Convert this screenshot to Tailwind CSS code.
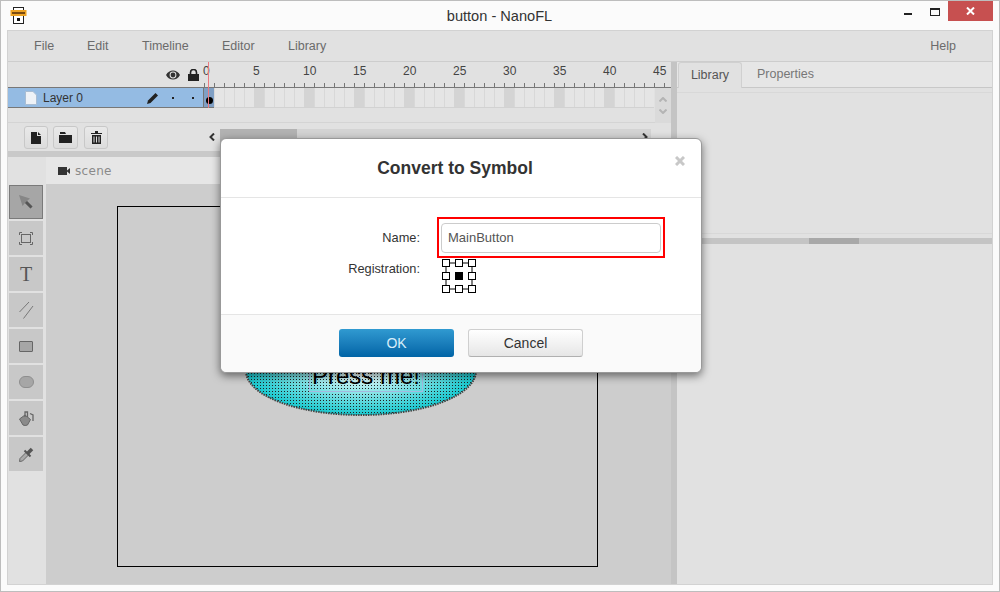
<!DOCTYPE html>
<html lang="en">
<head>
  <meta charset="UTF-8" />
  <title>button - NanoFL</title>
  <script src="https://cdn.jsdelivr.net/npm/@tailwindcss/browser@4"></script>
</head>
<body class="font-['Liberation_Sans',Arial,sans-serif]">
  <div class="relative w-[1000px] h-[592px] overflow-hidden bg-[#fbfbfb] border border-[#bdbdbd] flex flex-col">

    <!-- title bar -->
    <div class="h-[29px] shrink-0 flex items-start relative">
      <svg class="absolute left-[9px] top-[6px]" width="17" height="17" viewBox="0 0 17 17">
        <rect x="3.5" y="0.5" width="10" height="16" fill="#fff" stroke="#222"/>
        <rect x="0.5" y="3" width="16" height="6" fill="#eda324"/>
        <rect x="2" y="5" width="13" height="2" fill="#7a4a10"/>
        <rect x="7" y="11" width="3" height="3" fill="#111"/>
      </svg>
      <div class="flex-1 text-center text-[14.6px] leading-[30px] text-[#333] -ml-[1px]">button - NanoFL</div>
      <div class="absolute left-[903px] top-[12px] w-[8px] h-[2px] bg-[#222]"></div>
      <div class="absolute left-[929px] top-[7px] w-[10px] h-[8px] border border-t-2 border-[#222]"></div>
      <div class="absolute left-[947px] top-0 w-[45px] h-[20px] bg-[#c75050] flex items-center justify-center">
        <svg width="9" height="8" viewBox="0 0 9 8"><path d="M1 0.5 L8 7.5 M8 0.5 L1 7.5" stroke="#fff" stroke-width="2"/></svg>
      </div>
    </div>

    <!-- app -->
    <div class="ml-[6px] w-[986px] h-[555px] border border-[#d2d2d2] bg-[#e1e1e1] flex flex-col">
      <div class="h-[31px] shrink-0 border-b border-[#cdcdcd] flex items-center text-[12.5px] text-[#6b6b6b] pl-[26px]">
        <span class="w-[53px]">File</span>
        <span class="w-[55px]">Edit</span>
        <span class="w-[80px]">Timeline</span>
        <span class="w-[66px]">Editor</span>
        <span>Library</span>
        <span class="ml-auto mr-[36px]">Help</span>
      </div>

      <div class="flex flex-1 min-h-0">
        <!-- left side -->
        <div class="w-[663px] shrink-0 flex flex-col">
          <!-- timeline -->
          <div class="h-[89px] shrink-0 flex flex-col relative">
            <div class="h-[26px] shrink-0 flex border-b border-[#777]">
              <div class="w-[196px] shrink-0 flex items-center justify-end gap-[8px] pr-[5px] pt-[1px]">
                <svg width="14" height="10" viewBox="0 0 14 10"><path d="M0 5 C3 -1 11 -1 14 5 C11 11 3 11 0 5Z" fill="#333"/><circle cx="7" cy="5" r="3.4" fill="#e1e1e1"/><circle cx="7" cy="5" r="2.4" fill="#333"/></svg>
                <svg width="11" height="12" viewBox="0 0 11 12"><path d="M2.5 5V3.5a3 3 0 0 1 6 0V5" fill="none" stroke="#222" stroke-width="1.6"/><rect x="0" y="5" width="11" height="7" fill="#222"/></svg>
              </div>
              <div class="flex-1 relative text-[12px] text-[#444] leading-[19px] flex -ml-[1px]">
                <span class="w-[50px]">0</span><span class="w-[50px]">5</span><span class="w-[50px]">10</span><span class="w-[50px]">15</span><span class="w-[50px]">20</span><span class="w-[50px]">25</span><span class="w-[50px]">30</span><span class="w-[50px]">35</span><span class="w-[50px]">40</span><span class="w-[16px]">45</span>
                <div class="absolute left-[1px] right-0 bottom-0 h-[4px] bg-[repeating-linear-gradient(90deg,#777_0,#777_1px,transparent_1px,transparent_10px)]"></div>
              </div>
            </div>
            <div class="h-[21px] shrink-0 flex">
              <div class="w-[195px] shrink-0 h-[20px] bg-[#94bbe3] border-b border-[#777] flex items-center text-[12px] text-[#333]">
                <svg class="ml-[17px] mr-[6px]" width="12" height="14" viewBox="0 0 12 14"><path d="M0.5 0.5H8L11.5 4V13.5H0.5Z" fill="#eef2f7" stroke="#a9bdd3"/></svg>
                <span>Layer 0</span>
                <svg class="ml-[64px]" width="12" height="12" viewBox="0 0 12 12"><path d="M0 12 L1 8.5 L8.5 1 L11 3.5 L3.5 11Z" fill="#222"/></svg>
                <span class="ml-[13px] w-[2px] h-[2px] bg-[#222]"></span>
                <span class="ml-[18px] w-[2px] h-[2px] bg-[#222]"></span>
              </div>
              <div class="w-[11px] shrink-0 h-[20px] bg-[#7f9fc4] border-l border-b border-[#777] flex items-center justify-center">
                <span class="w-[7px] h-[7px] shrink-0 rounded-full bg-black mt-[6px]"></span>
              </div>
              <div class="w-[440px] h-[20px] border-b border-[#d2d2d2] bg-[repeating-linear-gradient(90deg,#d8d8d8_0,#d8d8d8_1px,#e5e5e5_1px,#e5e5e5_10px)] flex">
                <div class="w-[40px] h-full"></div><div class="w-[10px] h-full bg-[#d4d4d4]"></div>
                <div class="w-[40px] h-full"></div><div class="w-[10px] h-full bg-[#d4d4d4]"></div>
                <div class="w-[40px] h-full"></div><div class="w-[10px] h-full bg-[#d4d4d4]"></div>
                <div class="w-[40px] h-full"></div><div class="w-[10px] h-full bg-[#d4d4d4]"></div>
                <div class="w-[40px] h-full"></div><div class="w-[10px] h-full bg-[#d4d4d4]"></div>
                <div class="w-[40px] h-full"></div><div class="w-[10px] h-full bg-[#d4d4d4]"></div>
                <div class="w-[40px] h-full"></div><div class="w-[10px] h-full bg-[#d4d4d4]"></div>
                <div class="w-[40px] h-full"></div><div class="w-[10px] h-full bg-[#d4d4d4]"></div>
              </div>
            </div>
            <div class="h-[14px] shrink-0 border-b border-[#d4d4d4]"></div>
            <div class="flex-1 flex items-start pl-[16px] pt-[3px] gap-[5px]">
              <div class="w-[24px] h-[23px] rounded-[3px] border border-[#c8c8c8] bg-gradient-to-b from-[#e9e9e9] to-[#dcdcdc] flex items-center justify-center">
                <svg width="10" height="12" viewBox="0 0 10 12"><path d="M0 0H6V4H10V12H0Z M7 0L10 3H7Z" fill="#222"/></svg>
              </div>
              <div class="w-[25px] h-[23px] rounded-[3px] border border-[#c8c8c8] bg-gradient-to-b from-[#e9e9e9] to-[#dcdcdc] flex items-center justify-center">
                <svg width="13" height="11" viewBox="0 0 13 11"><path d="M0 3H13V11H0Z M1 0H6L7 2H1Z" fill="#222"/></svg>
              </div>
              <div class="w-[24px] h-[23px] rounded-[3px] border border-[#c8c8c8] bg-gradient-to-b from-[#e9e9e9] to-[#dcdcdc] flex items-center justify-center ml-[1px]">
                <svg width="11" height="13" viewBox="0 0 11 13"><path d="M0 2H11V3H0Z M4 0H7V2H4Z" fill="#222"/><path d="M1 4H10V13H1Z" fill="#222"/><path d="M3 5.5V11.5 M5.5 5.5V11.5 M8 5.5V11.5" stroke="#ddd"/></svg>
              </div>
            </div>
            <!-- scroll arrows of the timeline -->
            <div class="absolute left-[647px] top-[26px] w-[16px] h-[35px] bg-[#dadada] flex flex-col items-center justify-center gap-[7px]">
              <svg width="8" height="5" viewBox="0 0 8 5"><path d="M0.5 4.5L4 1L7.5 4.5" fill="none" stroke="#b4b4b4" stroke-width="2"/></svg>
              <svg width="8" height="5" viewBox="0 0 8 5"><path d="M0.5 0.5L4 4L7.5 0.5" fill="none" stroke="#b4b4b4" stroke-width="2"/></svg>
            </div>
            <div class="absolute left-[195px] top-[67px] w-[448px] h-[16px] bg-[#d3d3d3] flex">
              <div class="w-[17px] bg-[#e1e1e1] flex items-center justify-center">
                <svg width="6" height="8" viewBox="0 0 6 8"><path d="M5 0.5L1.5 4L5 7.5" fill="none" stroke="#333" stroke-width="2"/></svg>
              </div>
              <div class="w-[77px] bg-[#b2b2b2]"></div>
              <svg class="ml-auto mr-[3px] mt-[4px]" width="6" height="8" viewBox="0 0 6 8"><path d="M1 0.5L4.5 4L1 7.5" fill="none" stroke="#333" stroke-width="2"/></svg>
            </div>
            <div class="absolute left-[200px] top-0 w-[1px] h-[46px] bg-[#ec7a80]"></div>
          </div>

          <div class="h-[6px] shrink-0 bg-[#c9c9c9]"></div>

          <!-- editor -->
          <div class="flex flex-1 min-h-0">
            <div class="w-[38px] shrink-0 pt-[28px] pl-[1px] flex flex-col gap-[2px]">
              <div class="w-[34px] h-[34px] bg-[#a6a6a6] border border-[#7a7a7a] flex items-center justify-center">
                <svg width="14" height="14" viewBox="0 0 14 14"><path d="M0 0L11 3.5L8 6L13.5 11.5L11.5 13.5L6 8L3.5 11Z" fill="#868686"/><path d="M7 7L8 6L13.5 11.5L11.5 13.5L6 8Z" fill="#555"/></svg>
              </div>
              <div class="w-[34px] h-[34px] bg-[#c8c8c8] flex items-center justify-center">
                <svg width="14" height="13" viewBox="0 0 14 13"><rect x="2.5" y="2.5" width="9" height="8" fill="none" stroke="#666"/><path d="M0.5 3V0.5H3 M11 0.5H13.5V3 M0.5 10V12.5H3 M11 12.5H13.5V10" fill="none" stroke="#666"/></svg>
              </div>
              <div class="w-[34px] h-[34px] bg-[#c8c8c8] flex items-center justify-center font-['Liberation_Serif',serif] text-[20px] text-[#555]">T</div>
              <div class="w-[34px] h-[34px] bg-[#c8c8c8] flex items-center justify-center">
                <svg width="15" height="18" viewBox="0 0 15 18"><path d="M0.5 11L10 1 M4.5 17.5L14 5" stroke="#777" fill="none"/></svg>
              </div>
              <div class="w-[34px] h-[34px] bg-[#c8c8c8] flex items-center justify-center">
                <div class="w-[14px] h-[11px] bg-[#a6a6a6] border border-[#666] rounded-[1px]"></div>
              </div>
              <div class="w-[34px] h-[34px] bg-[#c8c8c8] flex items-center justify-center">
                <div class="w-[15px] h-[12px] bg-[#a6a6a6] border border-[#8e8e8e] rounded-full"></div>
              </div>
              <div class="w-[34px] h-[34px] bg-[#c8c8c8] flex items-center justify-center">
                <svg width="15" height="15" viewBox="0 0 15 15"><path d="M0.5 8L6 4L11.5 8.5L8.5 14Q6 15 4 14Z" fill="#8a8a8a" stroke="#666"/><path d="M6 6V1H8.5V6 M11 2.5L14 4V10" fill="none" stroke="#666" stroke-width="1.3"/></svg>
              </div>
              <div class="w-[34px] h-[34px] bg-[#c8c8c8] flex items-center justify-center">
                <svg width="15" height="15" viewBox="0 0 15 15"><path d="M0.5 14.5L1 11.5L7.5 5L10 7.5L3.5 14Z" fill="#aaa" stroke="#666"/><path d="M5.5 3.5L11.5 9.5" stroke="#555" stroke-width="2"/><path d="M8.5 6.5L13 2" stroke="#555" stroke-width="3.5"/></svg>
              </div>
            </div>
            <div class="flex-1 flex flex-col min-w-0">
              <div class="h-[27px] shrink-0 bg-[#e6e6e6] flex items-center pl-[12px] text-[12px] tracking-[0.3px] text-[#8a8a8a] font-['DejaVu_Sans',sans-serif]">
                <svg class="mr-[5px]" width="12" height="8" viewBox="0 0 12 8"><rect width="9" height="8" fill="#333"/><path d="M9 3.5L12 1V7L9 4.5Z" fill="#333"/></svg>
                <span>scene</span>
              </div>
              <div class="relative flex-1 bg-[#cdcdcd]">
                <div class="absolute left-[71px] top-[22px] w-[481px] h-[361px] border border-black"></div>
                <svg class="absolute left-[198px] top-[143px]" width="234" height="90" viewBox="0 0 234 90">
                  <defs>
                    <radialGradient id="fillGrad" cx="0.5" cy="0.5" r="0.55">
                      <stop offset="0" stop-color="#ffffff"/>
                      <stop offset="1" stop-color="#00c2c9"/>
                    </radialGradient>
                    <pattern id="dots" width="3" height="3" patternUnits="userSpaceOnUse">
                      <rect width="1" height="1" x="1" y="1" fill="#222"/>
                    </pattern>
                  </defs>
                  <ellipse cx="117" cy="44" rx="115" ry="44" fill="url(#fillGrad)"/>
                  <ellipse cx="117" cy="44" rx="115" ry="44" fill="url(#dots)"/>
                  <ellipse cx="117" cy="44" rx="115" ry="44" fill="none" stroke="#444" stroke-width="2" stroke-dasharray="1.5 1"/>
                  <rect x="65.5" y="20.5" width="113" height="44" fill="none" stroke="#a3b9de"/>
                </svg>
                <span class="absolute left-[266px] top-[178px] text-[24px] leading-[28px] text-black">Press me!</span>
              </div>
            </div>
          </div>
        </div>

        <div class="w-[6px] shrink-0 bg-[#c4c4c4]"></div>

        <!-- right side -->
        <div class="flex-1 flex flex-col">
          <div class="h-[26px] shrink-0 bg-[#e6e6e6] border-b border-[#c8c8c8] flex text-[12.5px] text-[#777]">
            <div class="w-[64px] h-[26px] ml-[1px] bg-[#e1e1e1] border-r border-t border-l border-[#d0d0d0] rounded-t-[3px] flex items-center justify-center text-[#555]">Library</div>
            <div class="ml-[15px] flex items-center">Properties</div>
          </div>
          <div class="h-[5px] shrink-0 border-b border-[#d8d8d8]"></div>
          <div class="h-[141px] shrink-0 border-b border-[#d8d8d8]"></div>
          <div class="h-[4px] shrink-0"></div>
          <div class="h-[6px] shrink-0 bg-[#c4c4c4] flex">
            <div class="ml-[132px] w-[50px] bg-[#a8a8a8]"></div>
          </div>
        </div>
      </div>
    </div>

    <!-- dialog -->
    <div class="absolute left-[219px] top-[137px] w-[482px] h-[235px] bg-white rounded-[6px] border border-[#999] shadow-[0_3px_9px_rgba(0,0,0,0.5)] flex flex-col">
      <div class="h-[59px] shrink-0 border-b border-[#e5e5e5] relative flex items-center justify-center">
        <span class="font-bold text-[17.5px] text-[#333] -ml-[12px]">Convert to Symbol</span>
        <svg class="absolute left-[454px] top-[17px]" width="10" height="10" viewBox="0 0 10 10"><path d="M1 1L9 9 M9 1L1 9" stroke="#c8c8c8" stroke-width="3"/></svg>
      </div>
      <div class="h-[117px] shrink-0 border-b border-[#e5e5e5] text-[12.8px] text-[#333] relative">
        <div class="flex items-center mt-[25px] h-[30px]">
          <span class="w-[199px] text-right">Name:</span>
          <div class="ml-[21px] w-[220px] h-[30px] rounded-[4px] border border-[#ccc] bg-white text-[13px] text-[#555] flex items-center pl-[6px]">MainButton</div>
        </div>
        <div class="flex items-start mt-[6px]">
          <span class="w-[199px] text-right">Registration:</span>
          <svg class="ml-[22px]" width="34" height="34" viewBox="0 0 34 34">
            <path d="M4 4H30V30H4Z" fill="none" stroke="#000"/>
            <g fill="#fff" stroke="#000">
              <rect x="0.5" y="0.5" width="7" height="7"/><rect x="13.5" y="0.5" width="7" height="7"/><rect x="26.5" y="0.5" width="7" height="7"/>
              <rect x="0.5" y="13.5" width="7" height="7"/><rect x="26.5" y="13.5" width="7" height="7"/>
              <rect x="0.5" y="26.5" width="7" height="7"/><rect x="13.5" y="26.5" width="7" height="7"/><rect x="26.5" y="26.5" width="7" height="7"/>
            </g>
            <rect x="13" y="13" width="8" height="8" fill="#000"/>
          </svg>
        </div>
        <div class="absolute left-[216px] top-[19px] w-[228px] h-[41px] border-2 border-[#f00]"></div>
      </div>
      <div class="flex-1 bg-[#fafafa] rounded-b-[6px] flex items-start pt-[14px] pl-[118px] gap-[14px]">
        <button class="w-[115px] h-[28px] rounded-[3px] text-[14px] text-[#d8eefa] bg-gradient-to-b from-[#309ad1] to-[#0064a6]">OK</button>
        <button class="w-[115px] h-[28px] rounded-[3px] text-[14px] text-[#333] border border-[#cfcfcf] border-b-[#b0b0b0] bg-gradient-to-b from-white to-[#e6e6e6]">Cancel</button>
      </div>
    </div>
  </div>
</body>
</html>
